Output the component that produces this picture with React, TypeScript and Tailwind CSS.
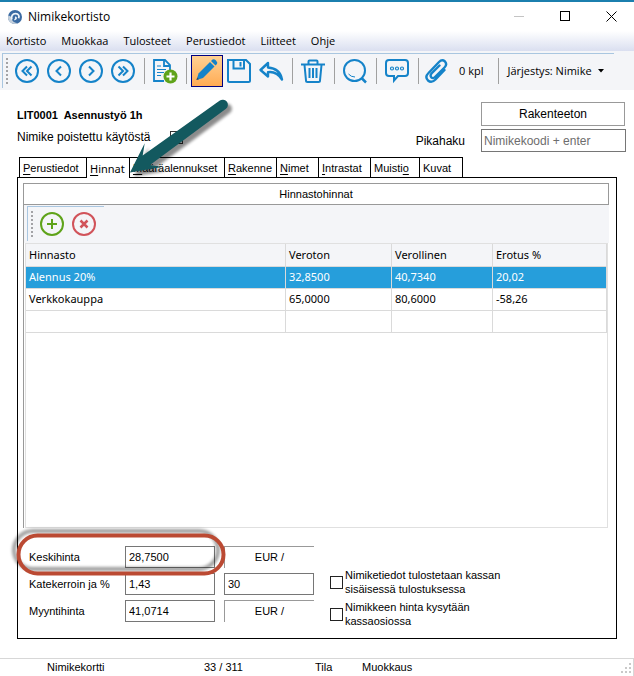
import React from "react";

type IconProps = { children: React.ReactNode };

function Icon({ children }: IconProps) {
  return (
    <svg width="26" height="26" viewBox="0 0 26 26" fill="none" stroke="#1583c9" strokeWidth="2" aria-hidden="true">
      {children}
    </svg>
  );
}

function ToolButton({ label, active, children }: { label: string; active?: boolean; children: React.ReactNode }) {
  return (
    <button
      type="button"
      aria-label={label}
      className={
        active
          ? "flex h-8 w-8 shrink-0 items-center justify-center border border-[#000080] bg-linear-to-b from-[#ffd193] to-[#ffab52]"
          : "flex h-8 w-8 shrink-0 items-center justify-center"
      }
    >
      <Icon>{children}</Icon>
    </button>
  );
}

function Separator() {
  return <span className="ml-[5px] mr-1 h-[26px] w-px shrink-0 bg-[#a0a0a0]" />;
}

function Grip() {
  return (
    <svg width="2" height="26" className="shrink-0" aria-hidden="true">
      <path d="M1 0V26" stroke="#a3a3a6" strokeWidth="2" strokeDasharray="2 2" />
    </svg>
  );
}

const menus = ["Kortisto", "Muokkaa", "Tulosteet", "Perustiedot", "Liitteet", "Ohje"];

function TitleBar() {
  return (
    <header className="flex h-[31px] items-center border-t-2 border-[#1b7fae] pl-2">
      <svg width="14" height="14" viewBox="0 0 14 14" aria-hidden="true">
        <circle cx="7" cy="7" r="7" fill="#3a6ba3" />
        <path d="M0 7C0 11 3 14 7 14C8 14 9 13.800 10 13.300C6.500 13 4.500 11.500 3.800 9C3 6 1.500 5.500 .2 6Z" fill="#c3cfdb" />
        <path d="M3.800 9.500C2.800 6 4.800 3.600 7.500 3.600C10.500 3.600 11.800 6.200 10.500 8.200" fill="none" stroke="#eef3f8" strokeWidth="1.800" />
        <path d="M7 6.500C8.500 6.300 9.300 7.500 8.800 8.800C8.300 10 7 10.500 6 10Q7.300 8.500 7 6.500Z" fill="#eef3f8" />
      </svg>
      <h1 className="ml-1.5 flex-1 font-['Open_Sans',sans-serif] text-[12px]">Nimikekortisto</h1>
      <button type="button" aria-label="Pienennä" className="flex h-7 w-[46px] items-center justify-center">
        <svg width="11" height="11" aria-hidden="true"><path d="M0 5.500H10" stroke="#c4c4c4" /></svg>
      </button>
      <button type="button" aria-label="Suurenna" className="flex h-7 w-[46px] items-center justify-center">
        <svg width="11" height="11" aria-hidden="true"><rect x=".5" y=".5" width="9" height="9" fill="none" stroke="#000" /></svg>
      </button>
      <button type="button" aria-label="Sulje" className="flex h-7 w-[46px] items-center justify-center">
        <svg width="11" height="11" aria-hidden="true"><path d="M.5 .5L10.500 10.500M10.500 .5L.5 10.500" stroke="#000" /></svg>
      </button>
    </header>
  );
}

function MenuBar() {
  return (
    <nav className="flex h-5 items-center gap-[15px] bg-linear-to-b from-white to-[#dadff0] pl-1.5 pt-px font-['Open_Sans',sans-serif] text-[11px]">
      {menus.map((m) => (
        <button key={m} type="button">{m}</button>
      ))}
    </nav>
  );
}

function ToolBar() {
  return (
    <div className="bg-[#f4f5f8] pb-0.5 pl-0.5 pr-5 pt-0.5">
      <div role="toolbar" className="flex h-[35px] items-center border-l border-t border-[#a9c6e0] pl-[3px]">
        <Grip />
        <span className="w-[3px] shrink-0" />
        <ToolButton label="Ensimmäinen">
          <circle cx="13" cy="13" r="11" />
          <path d="M13 8.500L8.500 13L13 17.500M17.500 8.500L13 13L17.500 17.500" />
        </ToolButton>
        <ToolButton label="Edellinen">
          <circle cx="13" cy="13" r="11" />
          <path d="M15 8.500L10.500 13L15 17.500" />
        </ToolButton>
        <ToolButton label="Seuraava">
          <circle cx="13" cy="13" r="11" />
          <path d="M11 8.500L15.500 13L11 17.500" />
        </ToolButton>
        <ToolButton label="Viimeinen">
          <circle cx="13" cy="13" r="11" />
          <path d="M8.500 8.500L13 13L8.500 17.500M13 8.500L17.500 13L13 17.500" />
        </ToolButton>
        <Separator />
        <ToolButton label="Uusi">
          <path d="M12 23H2V2H13L18 7V12M12 2V8H18" strokeWidth="1.800" />
          <path d="M5 8H9M5 11.500H14M5 14.500H12M5 17.500H9" strokeWidth="1.200" />
          <circle cx="18.500" cy="18.500" r="7" fill="#5fa31a" stroke="none" />
          <path d="M18.500 14.500V22.500M14.500 18.500H22.500" stroke="#fff" strokeWidth="2.200" />
        </ToolButton>
        <Separator />
        <ToolButton label="Muokkaa" active>
          <g transform="translate(-.5 -1)" fill="#1583c9" stroke="none">
            <path d="M3 23L5 16.500L16.500 5L21 9.500L9.500 21Z" />
            <path d="M17.500 4L19 2.500Q20.500 1.500 22.500 3.500Q24.500 5.500 23.500 7L22 8.500Z" />
            <path d="M3 23L3.700 20.500L5.500 22.300Z" fill="#3a4a5c" />
          </g>
        </ToolButton>
        <ToolButton label="Tallenna">
          <path d="M2 2H20L24 6V22.500Q24 24 22.500 24H3.500Q2 24 2 22.500Z" />
          <path d="M7.500 2V10.500H18V2M14.500 4V8.500" />
        </ToolButton>
        <ToolButton label="Kumoa">
          <path d="M10 5L2.500 12L10 18.500V14.200Q18.500 13 24 21.500Q22 10.500 10 9.500Z" strokeWidth="2.400" strokeLinejoin="round" />
        </ToolButton>
        <Separator />
        <ToolButton label="Poista">
          <path d="M1 6.500H25M8.500 6V3.500Q8.500 2.500 9.500 2.500H16.500Q17.500 2.500 17.500 3.500V6M4.500 7L6 22.500Q6 24 7.500 24H18.500Q20 24 20 22.500L21.500 7" />
          <path d="M9.500 10V20M13 10V20M16.500 10V20" />
        </ToolButton>
        <Separator />
        <ToolButton label="Etsi">
          <circle cx="12.500" cy="12.500" r="10.500" />
          <path d="M19.500 20L24 24.500" strokeWidth="2.500" />
          <path d="M6.500 16Q9 19 13 19" strokeWidth="1" />
        </ToolButton>
        <Separator />
        <ToolButton label="Viesti">
          <path d="M5 2H21Q24 2 24 5V15Q24 18 21 18H14L10 22.500V18H5Q2 18 2 15V5Q2 2 5 2Z" />
          <g strokeWidth="1.200">
            <circle cx="8" cy="10.500" r="1.500" />
            <circle cx="13" cy="10.500" r="1.500" />
            <circle cx="18" cy="10.500" r="1.500" />
          </g>
        </ToolButton>
        <Separator />
        <button type="button" className="flex h-8 items-center whitespace-nowrap font-['Open_Sans',sans-serif] text-[11px]">
          <Icon>
            <path
              d="M21.500 12L12.500 21.500Q8.500 25.500 5 22.500Q1.500 19 5.500 15L16 4Q19 1 22 3.500Q24.500 6.500 21.500 9.500L12 19Q10 21 8.300 19.300Q6.800 17.500 8.500 15.500L16.500 7.500"
              strokeWidth="2.400"
              strokeLinecap="round"
            />
          </Icon>
          <span className="ml-2.5">0 kpl</span>
        </button>
        <span className="ml-[15px] mr-2 h-[26px] w-px shrink-0 bg-[#a0a0a0]" />
        <button type="button" className="flex items-center gap-1.5 whitespace-nowrap font-['Open_Sans',sans-serif] text-[11px]">
          Järjestys: Nimike
          <svg width="6" height="4" aria-hidden="true"><path d="M0 0H6L3 3.500Z" fill="#000" /></svg>
        </button>
      </div>
    </div>
  );
}

function ItemHeader() {
  return (
    <section className="flex items-start pl-[17px] pr-2">
      <div className="flex-1 pt-[5px]">
        <h2 className="whitespace-pre text-[11px] font-bold leading-4">LIT0001  Asennustyö 1h</h2>
        <div className="mt-1.5 flex items-center gap-5 text-[12px] leading-4">
          <label htmlFor="poistettu">Nimike poistettu käytöstä</label>
          <input id="poistettu" type="checkbox" className="h-[13px] w-[13px] appearance-none border border-[#333] bg-white" />
        </div>
      </div>
      <div className="flex flex-col items-end gap-[3px] text-[12px]">
        <button type="button" className="mr-px h-6 w-36 border border-[#999]">Rakenteeton</button>
        <div className="flex items-center gap-4">
          <label htmlFor="pikahaku">Pikahaku</label>
          <input id="pikahaku" placeholder="Nimikekoodi + enter" className="h-[23px] w-[145px] border border-[#767676] px-0.5 placeholder:text-[#6d6d6d]" />
        </div>
      </div>
    </section>
  );
}

const tabs: { pre: string; key: string; post: string; width: string }[] = [
  { pre: "", key: "P", post: "erustiedot", width: "w-[67px]" },
  { pre: "", key: "H", post: "innat", width: "w-[43px]" },
  { pre: "", key: "M", post: "ääräalennukset", width: "w-[95px]" },
  { pre: "", key: "R", post: "akenne", width: "w-[52px]" },
  { pre: "", key: "N", post: "imet", width: "w-[42px]" },
  { pre: "", key: "I", post: "ntrastat", width: "w-[52px]" },
  { pre: "Muisti", key: "o", post: "", width: "w-[49px]" },
  { pre: "Kuvat", key: "", post: "", width: "w-[43px]" },
];

function Tabs() {
  return (
    <div role="tablist" className="ml-[19px] flex h-5 border-l border-black text-[11px]">
      {tabs.map((t, i) => {
        const active = i === 1;
        return (
          <button
            key={t.pre + t.key}
            type="button"
            role="tab"
            aria-selected={active}
            className={`${t.width} whitespace-nowrap border-r border-t border-black pl-[3px] text-left ${
              active ? "relative -mb-px h-[21px] bg-white pt-[3px] font-['Noto_Sans',sans-serif]" : "h-full pt-0.5"
            }`}
          >
            {t.pre}
            <span className="underline underline-offset-2">{t.key}</span>
            {t.post}
          </button>
        );
      })}
    </div>
  );
}

const columns = ["Hinnasto", "Veroton", "Verollinen", "Erotus %"];
const rows = [
  ["Alennus 20%", "32,8500", "40,7340", "20,02"],
  ["Verkkokauppa", "65,0000", "80,6000", "-58,26"],
  ["", "", "", ""],
];

function PriceTable() {
  return (
    <div className="flex-1 border border-[#e0e0e0] bg-white">
      <table className="w-full table-fixed border-collapse font-['Noto_Sans',sans-serif] text-[11px] leading-4">
        <colgroup>
          <col />
          <col className="w-[106px]" />
          <col className="w-[101px]" />
          <col className="w-[114px]" />
        </colgroup>
        <thead>
          <tr className="h-[22px] bg-[#f4f5f8]">
            {columns.map((c) => (
              <th key={c} className="border-b border-r border-[#dadada] px-[3px] text-left font-normal">{c}</th>
            ))}
          </tr>
        </thead>
        <tbody>
          {rows.map((r, i) => (
            <tr key={i} className={i === 0 ? "h-[22px] bg-[#269edb] text-white" : "h-[22px]"}>
              {r.map((v, j) => (
                <td key={j} className="border-b border-r border-[#dadada] px-[3px]">{v}</td>
              ))}
            </tr>
          ))}
        </tbody>
      </table>
    </div>
  );
}

function PriceLists() {
  return (
    <section className="flex flex-1 flex-col border-l border-[#999]">
      <h3 className="-ml-px flex h-[22px] items-center justify-center border border-[#999] text-[11px]">Hinnastohinnat</h3>
      <div className="bg-[#f4f5f8] pb-0.5 pl-[3px] pt-px">
        <div role="toolbar" className="flex h-[35px] w-[77px] items-center border-l border-t border-[#a9c6e0] pl-[3px]">
          <Grip />
          <span className="w-[3px] shrink-0" />
          <ToolButton label="Lisää">
            <g stroke="#5fa31a">
              <circle cx="13" cy="13" r="11" />
              <path d="M13 8V18M8 13H18" />
            </g>
          </ToolButton>
          <ToolButton label="Poista rivi">
            <g stroke="#d1535a">
              <circle cx="13" cy="13" r="11" />
              <path d="M9.500 9.500L16.500 16.500M16.500 9.500L9.500 16.500" strokeWidth="2.500" />
            </g>
          </ToolButton>
        </div>
      </div>
      <div className="flex flex-1 px-px">
        <PriceTable />
      </div>
    </section>
  );
}

const fieldClass = "h-[22px] w-[90px] border border-[#767676] bg-white px-[3px]";
const unitClass = "h-[22px] w-[90px] border-l border-t border-[#999] pt-[3px] text-center";

function Fields() {
  return (
    <section className="flex pb-4 pl-1.5 pt-[18px] text-[11px] leading-[14px]">
      <div className="grid grid-cols-[96px_99px_90px] content-start items-center gap-y-[5px]">
        <label htmlFor="keskihinta">Keskihinta</label>
        <input id="keskihinta" defaultValue="28,7500" className={fieldClass} />
        <span className={unitClass}>EUR /</span>
        <label htmlFor="kate">Katekerroin ja %</label>
        <input id="kate" defaultValue="1,43" className={fieldClass} />
        <input aria-label="Kateprosentti" defaultValue="30" className={fieldClass} />
        <label htmlFor="myynti">Myyntihinta</label>
        <input id="myynti" defaultValue="41,0714" className={fieldClass} />
        <span className={unitClass}>EUR /</span>
      </div>
      <div className="-mb-4 ml-4 flex w-[180px] flex-col gap-1 pt-[22px]">
        <label className="flex items-center gap-0.5">
          <input type="checkbox" className="h-[13px] w-[13px] shrink-0 appearance-none border border-[#222] bg-white" />
          Nimiketiedot tulostetaan kassan sisäisessä tulostuksessa
        </label>
        <label className="flex items-center gap-0.5">
          <input type="checkbox" className="h-[13px] w-[13px] shrink-0 appearance-none border border-[#222] bg-white" />
          <span className="w-[140px]">Nimikkeen hinta kysytään kassaosiossa</span>
        </label>
      </div>
    </section>
  );
}

function StatusBar() {
  return (
    <footer className="mt-[19px] flex h-[18px] items-center border-r border-t border-[#d7d7d7] pl-[47px] text-[11px]">
      <span className="w-[157px]">Nimikekortti</span>
      <span className="w-[111px]">33 / 311</span>
      <span className="w-[47px]">Tila</span>
      <span className="flex-1">Muokkaus</span>
      <svg width="10" height="10" className="mr-0.5" fill="#c9c9c9" aria-hidden="true">
        <path d="M8 0h2v2h-2zM4 4h2v2h-2zM8 4h2v2h-2zM0 8h2v2h-2zM4 8h2v2h-2zM8 8h2v2h-2z" />
      </svg>
    </footer>
  );
}

function Annotations() {
  return (
    <svg className="pointer-events-none absolute left-0 top-0" width="240" height="600" fill="none" aria-hidden="true">
      <defs>
        <filter id="soft" x="-20%" y="-30%" width="140%" height="160%">
          <feGaussianBlur stdDeviation="1.800" />
        </filter>
      </defs>
      <path
        d="M130 172.500L144.700 143.300L142.700 155.500L219.500 100.800A5 5 0 0 1 226 108.800L150 165L162 167Z"
        transform="translate(4 4)"
        fill="#000"
        opacity=".45"
        filter="url(#soft)"
      />
      <path d="M130 172.500L144.700 143.300L142.700 155.500L219.500 100.800A5 5 0 0 1 226 108.800L150 165L162 167Z" fill="#13595f" />
      <rect x="14" y="531" width="204" height="38" rx="19" stroke="#000" strokeWidth="4" opacity=".38" filter="url(#soft)" />
      <rect x="18.500" y="535.500" width="205" height="38" rx="19" stroke="#bb4a33" strokeWidth="4" />
    </svg>
  );
}

export default function App() {
  return (
    <div className="relative flex min-h-screen flex-col bg-white font-['Liberation_Sans',Arial,sans-serif] text-black">
      <TitleBar />
      <MenuBar />
      <ToolBar />
      <main className="flex flex-1 flex-col pt-3">
        <ItemHeader />
        <div className="mt-[5px]">
          <Tabs />
        </div>
        <div className="mx-[17px] flex flex-1 flex-col border border-black pl-[5px] pr-[7px] pt-[5px]">
          <PriceLists />
          <Fields />
        </div>
      </main>
      <StatusBar />
      <Annotations />
    </div>
  );
}
